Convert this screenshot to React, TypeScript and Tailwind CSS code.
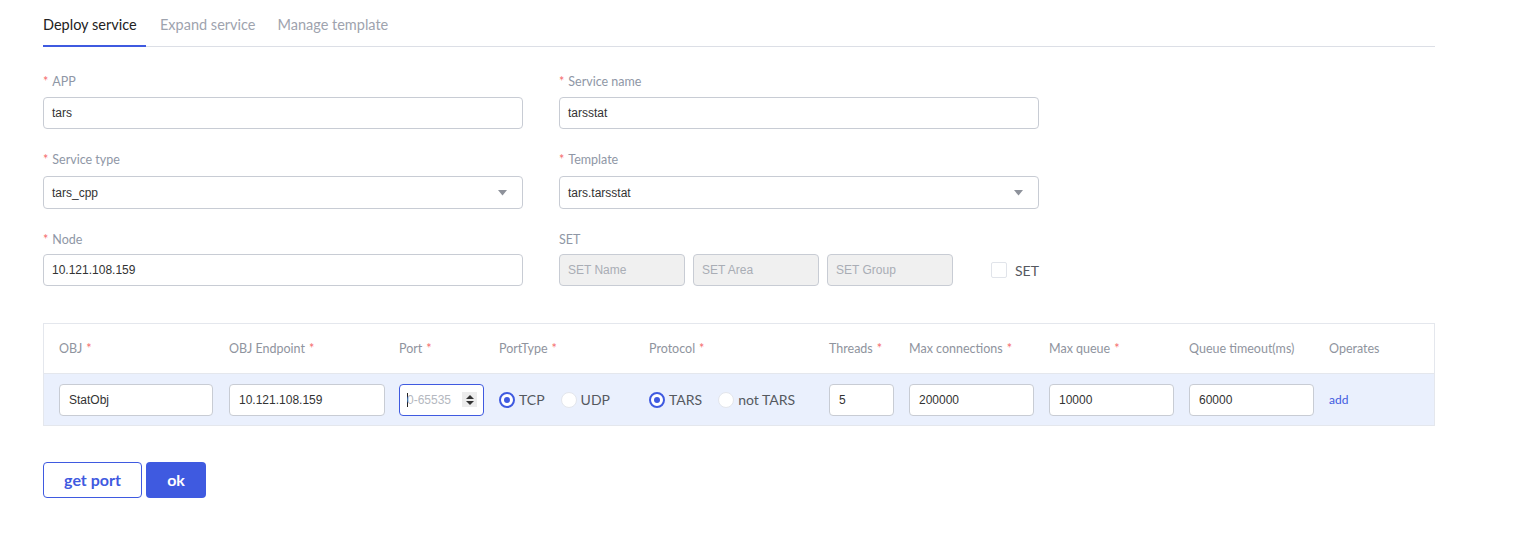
import React from "react";

const lato = "font-['Lato','Noto_Sans',sans-serif]";
const arial = "font-['Liberation_Sans',Arial,sans-serif]";

function Label({ text, req = true, mb = "mb-[7px]" }: { text: string; req?: boolean; mb?: string }) {
  return (
    <div className={`${lato} text-[12.5px] leading-[16px] text-[#8f97a6] ${mb} h-[16px]`}>
      {req && <span className="text-[#f56c6c] mr-[4px]">*</span>}
      {text}
    </div>
  );
}

function TextInput({ value, w = "w-[480px]" }: { value: string; w?: string }) {
  return (
    <div className={`${w} h-[32px] border border-[#c8ccd4] rounded-[4px] bg-white flex items-center px-[8px] ${arial} text-[12px] text-[#333]`}>
      {value}
    </div>
  );
}

function SelectInput({ value }: { value: string }) {
  return (
    <div className={`w-[480px] h-[33px] border border-[#c8ccd4] rounded-[4px] bg-white flex items-center justify-between pl-[8px] pr-[15px] ${arial} text-[12px] text-[#333]`}>
      <span>{value}</span>
      <svg width="9" height="6" viewBox="0 0 9 6"><path d="M0 0 L9 0 L4.5 5.5 Z" fill="#8e929b" /></svg>
    </div>
  );
}

function SetInput({ ph }: { ph: string }) {
  return (
    <div className={`w-[126px] h-[32px] border border-[#c8ccd4] rounded-[4px] bg-[#f0f0f0] flex items-center px-[8px] ${arial} text-[12px] text-[#a9adb5]`}>
      {ph}
    </div>
  );
}

function Radio({ checked, label }: { checked: boolean; label: string }) {
  return (
    <div className="flex items-center mr-[16px]">
      {checked ? (
        <span className="w-[16px] h-[16px] rounded-full border-[2px] border-[#3f5ae0] bg-white flex items-center justify-center">
          <span className="w-[6px] h-[6px] rounded-full bg-[#3f5ae0]" />
        </span>
      ) : (
        <span className="w-[16px] h-[16px] rounded-full border border-[#e3e6ec] bg-white" />
      )}
      <span className={`${lato} text-[14px] text-[#55595f] ml-[4px]`}>{label}</span>
    </div>
  );
}

function CellInput({ value, w }: { value: string; w: string }) {
  return (
    <div className={`${w} h-[32px] border border-[#c8ccd4] rounded-[4px] bg-white flex items-center px-[9px] ${arial} text-[12px] text-[#333]`}>
      {value}
    </div>
  );
}

function HeadCell({ text, req = true }: { text: string; req?: boolean }) {
  return (
    <div className={`${lato} text-[12.5px] text-[#8f949e] pt-[2px]`}>
      {text}
      {req && <span className="text-[#f56c6c] ml-[4px]">*</span>}
    </div>
  );
}

export default function App() {
  const cols = "grid grid-cols-[170px_170px_100px_150px_180px_80px_140px_140px_140px_1fr] pl-[15px]";
  return (
    <div className="w-[1533px] h-[549px] bg-white relative">
      <div className="pl-[43px] w-[1435px]">
        {/* Tabs */}
        <div className="flex items-end h-[47px] border-b border-[#dcdfe6]">
          <div className={`${lato} text-[14.5px] text-[#222] h-[47px] flex items-center border-b-[2px] border-[#3f5ae0] -mb-[1px] pt-[4px] w-[103px]`}>Deploy service</div>
          <div className={`${lato} text-[14.5px] text-[#9ea3ae] h-[47px] flex items-center ml-[14px] pt-[4px]`}>Expand service</div>
          <div className={`${lato} text-[14.5px] text-[#9ea3ae] h-[47px] flex items-center ml-[22px] pt-[4px]`}>Manage template</div>
        </div>

        {/* Form */}
        <div className="pt-[27px] flex flex-col gap-[23px]">
          <div className="flex gap-[36px]">
            <div><Label text="APP" /><TextInput value="tars" /></div>
            <div><Label text="Service name" /><TextInput value="tarsstat" /></div>
          </div>
          <div className="flex gap-[36px]">
            <div><Label text="Service type" mb="mb-[8px]" /><SelectInput value="tars_cpp" /></div>
            <div><Label text="Template" mb="mb-[8px]" /><SelectInput value="tars.tarsstat" /></div>
          </div>
          <div className="flex gap-[36px]">
            <div><Label text="Node" mb="mb-[6px]" /><TextInput value="10.121.108.159" /></div>
            <div>
              <Label text="SET" req={false} mb="mb-[6px]" />
              <div className="flex items-center gap-[8px]">
                <SetInput ph="SET Name" />
                <SetInput ph="SET Area" />
                <SetInput ph="SET Group" />
                <div className="flex items-center ml-[30px]">
                  <span className="w-[16px] h-[16px] border border-[#e1e4ea] rounded-[2px] bg-white" />
                  <span className={`${lato} text-[14px] text-[#55595f] ml-[8px]`}>SET</span>
                </div>
              </div>
            </div>
          </div>
        </div>

        {/* Table */}
        <div className="mt-[37px] border border-[#e4e7ed]">
          <div className={`${cols} h-[49px] items-center bg-white`}>
            <HeadCell text="OBJ" />
            <HeadCell text="OBJ Endpoint" />
            <HeadCell text="Port" />
            <HeadCell text="PortType" />
            <HeadCell text="Protocol" />
            <HeadCell text="Threads" />
            <HeadCell text="Max connections" />
            <HeadCell text="Max queue" />
            <HeadCell text="Queue timeout(ms)" req={false} />
            <HeadCell text="Operates" req={false} />
          </div>
          <div className={`${cols} h-[52px] items-center bg-[#eaf0fd] border-t border-[#e4e7ed]`}>
            <CellInput value="StatObj" w="w-[154px]" />
            <CellInput value="10.121.108.159" w="w-[156px]" />
            <div className="w-[85px] h-[32px] border border-[#3f5ae0] rounded-[4px] bg-white flex items-center justify-between pl-[7px] pr-[6px]">
              <span className={`${arial} text-[12px] text-[#b4b8c0] flex items-center`}>
                <span className="w-[1px] h-[14px] bg-[#222] mr-[-1px]" />0-65535
              </span>
              <span className="w-[15px] h-[15px] bg-[#ececec] flex items-center justify-center">
                <svg width="8" height="10" viewBox="0 0 8 10"><path d="M4 0 L8 4 L0 4 Z M4 10 L8 6 L0 6 Z" fill="#333" /></svg>
              </span>
            </div>
            <div className="flex items-center">
              <Radio checked label="TCP" />
              <Radio checked={false} label="UDP" />
            </div>
            <div className="flex items-center">
              <Radio checked label="TARS" />
              <Radio checked={false} label="not TARS" />
            </div>
            <CellInput value="5" w="w-[65px]" />
            <CellInput value="200000" w="w-[125px]" />
            <CellInput value="10000" w="w-[125px]" />
            <CellInput value="60000" w="w-[125px]" />
            <div className={`${lato} text-[12px] text-[#3f5ae0]`}>add</div>
          </div>
        </div>

        {/* Buttons */}
        <div className="mt-[36px] flex gap-[4px]">
          <button className={`w-[99px] h-[36px] border border-[#3f5ae0] rounded-[4px] bg-white text-[#3f5ae0] ${lato} font-bold text-[16px]`}>get port</button>
          <button className={`w-[60px] h-[36px] rounded-[4px] bg-[#3f5ae0] text-white ${lato} font-bold text-[16px]`}>ok</button>
        </div>
      </div>
    </div>
  );
}
